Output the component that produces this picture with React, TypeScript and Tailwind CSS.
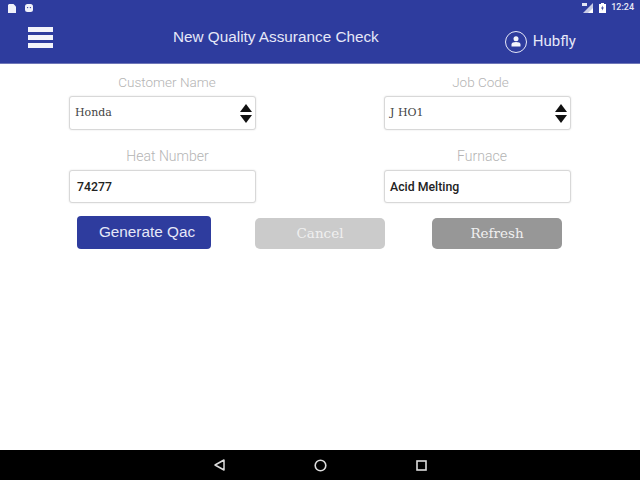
const sans = "font-['Liberation_Sans',sans-serif]";
const serif = "font-['DejaVu_Serif',serif]";

const FieldLabel = ({ text, shift }: { text: string; shift: string }) => (
  <p className={`h-[22px] text-center font-['Roboto',sans-serif] font-light leading-[22px] text-[#b4b4b4] ${shift}`}>
    {text}
  </p>
);

const SelectBox = ({ label, value, shift }: { label: string; value: string; shift: string }) => (
  <div className="w-[187px]">
    <FieldLabel text={label} shift={shift} />
    <div className="mt-[3px] flex h-[34px] items-center justify-between rounded-[3px] border border-[#d8d8d8] bg-white pl-[5px] pr-[3px] shadow-[0_0_2px_rgba(0,0,0,0.12)]">
      <span className={`${serif} pt-[1px] text-[11px] text-[#444]`}>{value}</span>
      <svg width="12" height="19" viewBox="0 0 12 19" className="text-[#111]">
        <path d="M6 0L12 8H0Z M0 11H12L6 19Z" fill="currentColor" />
      </svg>
    </div>
  </div>
);

const InputBox = ({ label, value, indent, shift }: { label: string; value: string; indent: string; shift: string }) => (
  <div className="w-[187px]">
    <FieldLabel text={label} shift={shift} />
    <div className={`mt-[3px] flex h-[33px] items-center rounded-[3px] border border-[#d8d8d8] bg-white shadow-[0_0_2px_rgba(0,0,0,0.12)] ${indent}`}>
      <span className="pt-[1px] font-['Roboto',sans-serif] text-[12.3px] font-medium text-[#222]">{value}</span>
    </div>
  </div>
);

export default function App() {
  return (
    <div className="flex h-[480px] w-[640px] flex-col overflow-hidden bg-white">
      <header className={`h-[64px] border-b border-[#6f77b8] bg-[#2e3c9e] ${sans} text-white`}>
        <div className="flex h-[16px] items-center justify-between pl-2 pr-[6px]">
          <div className="flex items-center gap-[9px]">
            <svg width="8" height="9" viewBox="0 0 8 9">
              <path d="M1 0H5.5L8 2.5V9H0V1Z" fill="#f1f2fa" />
            </svg>
            <svg width="8" height="8" viewBox="0 0 8 8">
              <rect width="8" height="8" rx="2.5" fill="#f1f2fa" />
              <circle cx="2.6" cy="3.6" r="0.7" fill="#2e3c9e" />
              <circle cx="5.4" cy="3.6" r="0.7" fill="#2e3c9e" />
            </svg>
          </div>
          <div className="flex items-center">
            <svg width="12" height="10" viewBox="0 0 12 10">
              <path d="M11 0V10H1Z" fill="#c9cce6" />
              <path d="M11 5V10H6Z" fill="#fff" />
              <rect x="0" y="0" width="5" height="3" fill="#e2e4f3" />
            </svg>
            <svg width="7" height="10" viewBox="0 0 7 10" className="ml-[5px]">
              <path d="M2 0H5V1H7V10H0V1H2Z" fill="#fff" />
              <path d="M3.8 2.5L2 5.6H3.2L2.9 7.8L4.9 4.5H3.6Z" fill="#2e3c9e" />
            </svg>
            <span className="ml-[5px] font-['Roboto',sans-serif] text-[9px] font-medium text-[#e8e9f6]">12:24</span>
          </div>
        </div>
        <div className="flex h-[47px] items-center">
          <div className="mb-[4px] ml-[28px] flex w-[25px] flex-col gap-[3px]">
            <div className="h-[5px] bg-[#f3f4fb]" />
            <div className="h-[5px] bg-[#f3f4fb]" />
            <div className="h-[5px] bg-[#f3f4fb]" />
          </div>
          <h1 className="mb-[4px] ml-[120px] text-[15.3px] text-[#e6e8f8]">New Quality Assurance Check</h1>
          <div className="ml-[126px] mt-[4px] flex items-center gap-[6px]">
            <div className="flex h-[22px] w-[22px] items-center justify-center rounded-full border border-[#e6e8f8]">
              <svg width="10" height="11" viewBox="0 0 10 11">
                <circle cx="5" cy="2.7" r="2.5" fill="#f3f4fb" />
                <path d="M0.5 10.5V8.4C0.5 6.8 2.5 6 5 6S9.5 6.8 9.5 8.4V10.5Z" fill="#f3f4fb" />
              </svg>
            </div>
            <span className="font-['Roboto',sans-serif] text-[15px] text-[#e6e8f8]">Hubfly</span>
          </div>
        </div>
      </header>

      <main className="flex-1 px-[69px] pt-[7px]">
        <div className="flex justify-between">
          <SelectBox label="Customer Name" value="Honda" shift="pl-[9px] text-[13.5px]" />
          <SelectBox label="Job Code" value="J HO1" shift="pl-[6px] text-[13.5px]" />
        </div>
        <div className="mt-[15px] flex justify-between">
          <InputBox label="Heat Number" value="74277" indent="pl-[7px]" shift="pl-[10px] text-[14px]" />
          <InputBox label="Furnace" value="Acid Melting" indent="pl-[5px]" shift="pl-[9px] text-[14px]" />
        </div>
        <div className="mt-[13px] flex items-center pl-[8px]">
          <button className={`h-[33px] w-[134px] rounded-[4px] bg-[#2e3c9e] pl-[6px] ${sans} text-[15.3px] text-[#e6e8f8]`}>
            Generate Qac
          </button>
          <button className={`ml-[44px] mt-[2px] h-[31px] w-[130px] rounded-[5px] bg-[#cbcbcb] ${serif} text-[13.5px] text-[#f0f0f0]`}>
            Cancel
          </button>
          <button className={`ml-[47px] mt-[2px] h-[31px] w-[130px] rounded-[5px] bg-[#979797] ${serif} text-[13.5px] text-[#f0f0f0]`}>
            Refresh
          </button>
        </div>
      </main>

      <nav className="flex h-[30px] items-center bg-black">
        <svg width="11" height="12" viewBox="0 0 11 12" className="ml-[214px]">
          <path d="M10 1V11L1 6Z" fill="none" stroke="#dcdcdc" strokeWidth="1.5" strokeLinejoin="round" />
        </svg>
        <svg width="13" height="13" viewBox="0 0 13 13" className="ml-[89px]">
          <circle cx="6.5" cy="6.5" r="5.3" fill="none" stroke="#dcdcdc" strokeWidth="1.6" />
        </svg>
        <svg width="11" height="11" viewBox="0 0 11 11" className="ml-[89px]">
          <rect x="1" y="1" width="9" height="9" fill="none" stroke="#dcdcdc" strokeWidth="1.6" />
        </svg>
      </nav>
    </div>
  );
}
